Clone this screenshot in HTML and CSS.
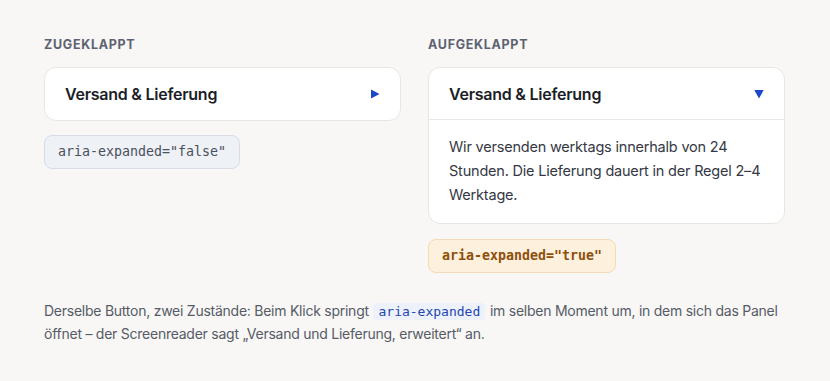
FILE: index.html
```html
<!DOCTYPE html>
<html lang="de">
  <head>
    <meta charset="UTF-8" />
    <title>Akkordeon: aria-expanded</title>
    <link rel="stylesheet" href="styles.css">
  </head>
  <body>
    <div class="compare">
      <section class="state">
        <h2 class="state-label">Zugeklappt</h2>
        <div class="card">
          <button class="card-head" aria-expanded="false">
            <span>Versand &amp; Lieferung</span>
            <svg class="arrow" width="10" height="10" viewBox="0 0 10 10"><path d="M1 0.5 L9.5 5 L1 9.5 Z" /></svg>
          </button>
        </div>
        <code class="attr attr-false">aria-expanded="false"</code>
      </section>

      <section class="state">
        <h2 class="state-label">Aufgeklappt</h2>
        <div class="card">
          <button class="card-head" aria-expanded="true">
            <span>Versand &amp; Lieferung</span>
            <svg class="arrow" width="10" height="10" viewBox="0 0 10 10"><path d="M0.3 1 L9.7 1 L5 9.5 Z" /></svg>
          </button>
          <div class="card-body">
            Wir versenden werktags innerhalb von 24 Stunden. Die Lieferung dauert in der Regel 2–4 Werktage.
          </div>
        </div>
        <code class="attr attr-true">aria-expanded="true"</code>
      </section>
    </div>

    <p class="note">
      Derselbe Button, zwei Zustände: Beim Klick springt <code class="inline">aria-expanded</code> im selben Moment um, in dem sich das Panel öffnet – der Screenreader sagt „Versand und Lieferung, erweitert“ an.
    </p>
  </body>
</html>
```

FILE: styles.css
```css
body {
  margin: 0;
  padding: 36px 45px 0 44px;
  background: #f8f7f5;
  font-family: "Inter", "Liberation Sans", sans-serif;
  color: #1f2330;
}
.compare {
  display: grid;
  grid-template-columns: 1fr 1fr;
  gap: 27px;
  align-items: start;
}
.state {
  display: flex;
  flex-direction: column;
  align-items: flex-start;
}
.state-label {
  margin: 0 0 13px;
  font-size: 12.5px;
  font-weight: 700;
  letter-spacing: 0.7px;
  text-transform: uppercase;
  color: #5d6270;
  line-height: 18px;
}
.card {
  align-self: stretch;
  background: #fff;
  border: 1px solid #e9e6e1;
  border-radius: 12px;
}
.card-head {
  display: flex;
  width: 100%;
  align-items: center;
  justify-content: space-between;
  height: 52px;
  padding: 0 20px 0 20px;
  border: 0;
  background: none;
  font-family: inherit;
  font-size: 16px;
  font-weight: 600;
  letter-spacing: -0.25px;
  color: #1b1e27;
  cursor: pointer;
}
.card-head[aria-expanded="true"] {
  border-bottom: 1px solid #ebe8e3;
}
.arrow {
  fill: #1d47c9;
}
.card-body {
  padding: 15px 20px 16px;
  font-size: 14.5px;
  letter-spacing: -0.2px;
  line-height: 24px;
  color: #353844;
}
.attr {
  margin-top: 14px;
  padding: 0 13px;
  height: 32px;
  line-height: 32px;
  border-radius: 8px;
  font-family: "DejaVu Sans Mono", "Liberation Mono", monospace;
  font-size: 13.3px;
}
.attr-false {
  background: #eef1f6;
  border: 1px solid #d8dde5;
  color: #4a505c;
}
.attr-true {
  margin-top: 15px;
  background: #fdf0dd;
  border: 1px solid #f3dbb6;
  color: #8f4f0b;
  font-weight: 700;
}
.note {
  margin: 27px 0 0;
  font-size: 14px;
  letter-spacing: -0.25px;
  line-height: 22px;
  color: #565b67;
}
.inline {
  padding: 1px 5px;
  margin: 0 1px;
  border-radius: 4px;
  background: #edf1fb;
  color: #2346b0;
  font-family: "DejaVu Sans Mono", "Liberation Mono", monospace;
  font-size: 13px;
  letter-spacing: 0;
}
```
